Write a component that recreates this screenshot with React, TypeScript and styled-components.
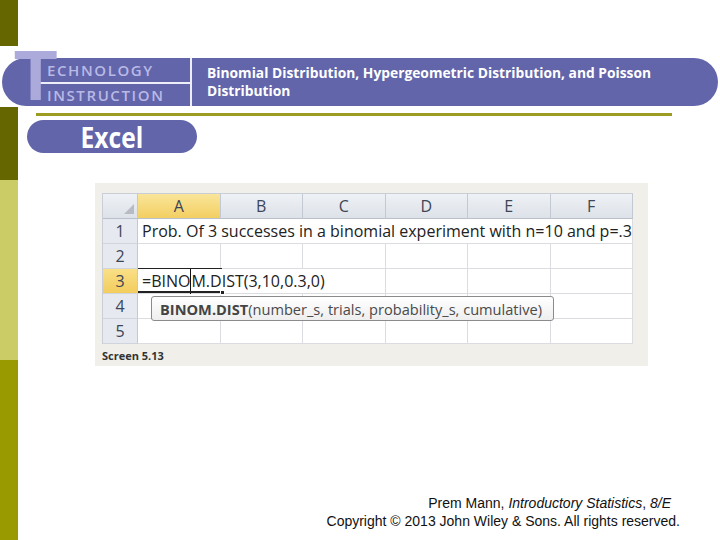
import React from "react";
import styled, { createGlobalStyle } from "styled-components";

const Global = createGlobalStyle`
  html, body { margin: 0; padding: 0; background: #ffffff; }
  #root { width: 720px; height: 540px; overflow: hidden; }
  * { box-sizing: border-box; }
`;

const PURPLE = "#6265aa";

const Slide = styled.div`
  display: flex;
  width: 720px;
  height: 540px;
  background: #ffffff;
`;

const Sidebar = styled.div`
  width: 18px;
  flex: none;
  display: flex;
  flex-direction: column;
`;

const SideSeg = styled.div<{ $h: number; $c: string }>`
  height: ${(p) => p.$h}px;
  background: ${(p) => p.$c};
`;

const Main = styled.div`
  flex: 1;
  min-width: 0;
  display: flex;
  flex-direction: column;
`;

const Banner = styled.div`
  position: relative;
  display: flex;
  height: 48px;
  margin: 58px 2px 0 -16px;
  background: ${PURPLE};
  border-radius: 24px;
`;

const BigT = styled.span`
  position: absolute;
  left: 12px;
  top: -18px;
  font-family: "Liberation Sans", Arial, sans-serif;
  font-weight: 700;
  font-size: 71px;
  line-height: 71px;
  color: #abaadb;
`;

const LogoBlock = styled.div`
  width: 188px;
  flex: none;
  display: flex;
  flex-direction: column;
  padding-left: 37px;
`;

const LogoRow = styled.div<{ $h: number }>`
  height: ${(p) => p.$h}px;
  display: flex;
  align-items: center;
  padding-left: 8px;
  font-family: "Open Sans", sans-serif;
  font-weight: 600;
  font-size: 15px;
  letter-spacing: 1.6px;
  color: #b9b9e6;
`;

const HRule = styled.div`
  height: 2px;
  background: #eeeef8;
`;

const VRule = styled.div`
  width: 2px;
  flex: none;
  background: #eeeef8;
`;

const Title = styled.div`
  flex: 1;
  display: flex;
  flex-direction: column;
  justify-content: center;
  padding-left: 15px;
  font-family: "Open Sans", sans-serif;
  font-weight: 700;
  font-size: 13.8px;
  line-height: 18px;
  color: #ffffff;
`;

const OliveRule = styled.div`
  width: 636px;
  height: 3px;
  margin: 7px 0 0 18px;
  background: #9c9c22;
`;

const Pill = styled.div`
  width: 170px;
  height: 33px;
  margin: 4px 0 0 9px;
  border-radius: 17px;
  background: ${PURPLE};
  display: flex;
  align-items: center;
  justify-content: center;
`;

const PillText = styled.span`
  display: inline-block;
  font-family: "Open Sans", sans-serif;
  font-weight: 700;
  font-size: 29px;
  line-height: 33px;
  color: #ffffff;
  transform: scaleX(0.85);
`;

const Shot = styled.div`
  width: 553px;
  height: 183px;
  margin: 30px 0 0 77px;
  padding: 10px 0 0 7px;
  background: #f0efe9;
`;

const Sheet = styled.div`
  position: relative;
  width: 531px;
  display: grid;
  grid-template-columns: 35px repeat(6, 1fr);
  grid-auto-rows: 25px;
  background: #ffffff;
  border-top: 1px solid #c9ced6;
  border-left: 1px solid #c9ced6;
  font-family: "Open Sans", sans-serif;
  font-size: 16px;
  color: #222;
`;

const ColHead = styled.div<{ $active?: boolean }>`
  display: flex;
  align-items: center;
  justify-content: center;
  border-right: 1px solid #c3c9d3;
  border-bottom: 1px solid #b9c0cb;
  background: ${(p) =>
    p.$active
      ? "linear-gradient(#f9e59a, #f3cf62)"
      : "linear-gradient(#eef1f5, #dde2e9)"};
  color: #3d4556;
  font-size: 16px;
`;

const Corner = styled.div`
  display: flex;
  align-items: flex-end;
  justify-content: flex-end;
  padding: 0 3px 4px 0;
  border-right: 1px solid #c3c9d3;
  border-bottom: 1px solid #b9c0cb;
  background: linear-gradient(#eef1f5, #dde2e9);
`;

const RowHead = styled.div<{ $active?: boolean }>`
  display: flex;
  align-items: center;
  justify-content: center;
  border-right: 1px solid #c3c9d3;
  border-bottom: 1px solid #d0d5dd;
  background: ${(p) =>
    p.$active ? "linear-gradient(#f9df86, #f3cd5e)" : "#e6e9ef"};
  color: #3d4556;
  font-size: 16px;
`;

const Cell = styled.div<{ $span?: number }>`
  grid-column: span ${(p) => p.$span ?? 1};
  display: flex;
  align-items: center;
  padding-left: 4px;
  white-space: nowrap;
  border-right: 1px solid #dadcdf;
  border-bottom: 1px solid #dadcdf;
`;

const Caret = styled.span`
  display: inline-block;
  width: 1px;
  height: 25px;
  background: #111;
`;

const ActiveCell = styled.div`
  position: absolute;
  left: 35px;
  top: 74px;
  width: 84px;
  height: 25px;
  border-top: 1px solid #222;
  border-bottom: 2px solid #222;
  pointer-events: none;
`;

const Handle = styled.div`
  position: absolute;
  right: -3px;
  bottom: -4px;
  width: 5px;
  height: 5px;
  background: #222;
  border: 1px solid #fff;
`;

const Tooltip = styled.div`
  position: absolute;
  left: 48px;
  top: 102px;
  width: 403px;
  height: 25px;
  padding-left: 8px;
  display: flex;
  align-items: center;
  background: linear-gradient(#ffffff, #eeeeee);
  border: 1px solid #8b8b8b;
  border-radius: 3px;
  color: #4a4a4a;
  white-space: nowrap;
  font-size: 14.6px;
`;

const Strong = styled.b`
  font-weight: 700;
  color: #444;
`;

const Caption = styled.div`
  margin-top: 5px;
  font-family: "Open Sans", sans-serif;
  font-weight: 700;
  font-size: 11px;
  line-height: 14px;
  color: #333;
`;

const Footer = styled.div`
  margin-top: auto;
  padding: 0 40px 10px 0;
  display: flex;
  flex-direction: column;
  align-items: flex-end;
  font-family: "Liberation Sans", Arial, sans-serif;
  font-size: 14px;
  line-height: 18px;
  color: #111;
`;

const FootLine = styled.div<{ $indent?: number }>`
  margin-right: ${(p) => p.$indent ?? 0}px;
`;

const cols = ["A", "B", "C", "D", "E", "F"];

function EmptyCells({ n }: { n: number }) {
  return (
    <>
      {Array.from({ length: n }).map((_, i) => (
        <Cell key={i} />
      ))}
    </>
  );
}

export default function App() {
  return (
    <>
      <Global />
      <Slide>
        <Sidebar>
          <SideSeg $h={46} $c="#666600" />
          <SideSeg $h={61} $c="transparent" />
          <SideSeg $h={73} $c="#666600" />
          <SideSeg $h={180} $c="#cccc66" />
          <SideSeg $h={180} $c="#999900" />
        </Sidebar>
        <Main>
          <Banner>
            <LogoBlock>
              <LogoRow $h={24}>ECHNOLOGY</LogoRow>
              <HRule />
              <LogoRow $h={22}>INSTRUCTION</LogoRow>
            </LogoBlock>
            <VRule />
            <Title>
              <div>Binomial Distribution, Hypergeometric Distribution, and Poisson</div>
              <div>Distribution</div>
            </Title>
            <BigT>T</BigT>
          </Banner>
          <OliveRule />
          <Pill>
            <PillText>Excel</PillText>
          </Pill>
          <Shot>
            <Sheet>
              <Corner>
                <svg width="10" height="10" viewBox="0 0 10 10">
                  <polygon points="10,0 10,10 0,10" fill="#b7bcc4" />
                </svg>
              </Corner>
              {cols.map((c) => (
                <ColHead key={c} $active={c === "A"}>
                  {c}
                </ColHead>
              ))}

              <RowHead>1</RowHead>
              <Cell $span={6}>
                Prob. Of 3 successes in a binomial experiment with n=10 and p=.3
              </Cell>

              <RowHead>2</RowHead>
              <EmptyCells n={6} />

              <RowHead $active>3</RowHead>
              <Cell $span={3}>
                =BINO
                <Caret />
                M.DIST(3,10,0.3,0)
              </Cell>
              <EmptyCells n={3} />

              <RowHead>4</RowHead>
              <EmptyCells n={6} />

              <RowHead>5</RowHead>
              <EmptyCells n={6} />

              <ActiveCell>
                <Handle />
              </ActiveCell>
              <Tooltip>
                <Strong>BINOM.DIST</Strong>(number_s, trials, probability_s, cumulative)
              </Tooltip>
            </Sheet>
            <Caption>Screen 5.13</Caption>
          </Shot>
          <Footer>
            <FootLine $indent={9}>
              Prem Mann, <i>Introductory Statistics</i>, <i>8/E</i>
            </FootLine>
            <FootLine>Copyright © 2013 John Wiley &amp; Sons. All rights reserved.</FootLine>
          </Footer>
        </Main>
      </Slide>
    </>
  );
}
